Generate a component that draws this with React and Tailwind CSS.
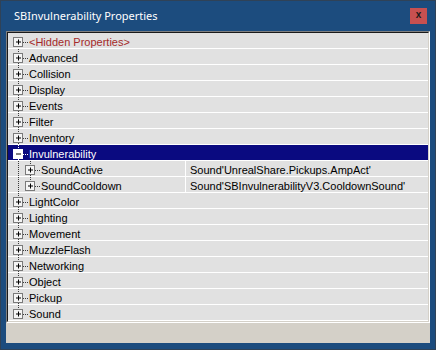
import React from 'react'

const rows = [
  { name: '<Hidden Properties>', hidden: true },
  { name: 'Advanced' },
  { name: 'Collision' },
  { name: 'Display' },
  { name: 'Events' },
  { name: 'Filter' },
  { name: 'Inventory' },
  { name: 'Invulnerability', open: true, selected: true },
  { name: 'SoundActive', child: true, value: "Sound'UnrealShare.Pickups.AmpAct'" },
  { name: 'SoundCooldown', child: true, lastChild: true, value: "Sound'SBInvulnerabilityV3.CooldownSound'" },
  { name: 'LightColor' },
  { name: 'Lighting' },
  { name: 'Movement' },
  { name: 'MuzzleFlash' },
  { name: 'Networking' },
  { name: 'Object' },
  { name: 'Pickup' },
  { name: 'Sound', last: true },
]

// tree glyph: dotted lines + expander box
function Box({ x, open, selected }) {
  return (
    <g>
      <rect x={x - 4.5} y={4.5} width={9} height={9} fill={selected ? '#ffffff' : '#f4f4f4'} stroke={selected ? '#ffffff' : '#7a7a7a'} />
      <line x1={x - 2} y1={9} x2={x + 3} y2={9} stroke="#000000" />
      {!open && <line x1={x + 0.5} y1={6.5} x2={x + 0.5} y2={11.5} stroke="#000000" />}
    </g>
  )
}

function Tree({ row, first }) {
  const dot = row.selected ? '#ffffff' : '#3a3a3a'
  if (row.child) {
    return (
      <svg width="33" height="15" className="shrink-0">
        <line x1="10.5" y1="0" x2="10.5" y2="15" stroke="#3a3a3a" strokeDasharray="1 1" />
        <line x1="22.5" y1="0" x2="22.5" y2={row.lastChild ? 5 : 15} stroke="#3a3a3a" strokeDasharray="1 1" />
        <line x1="27" y1="9.5" x2="32" y2="9.5" stroke="#3a3a3a" strokeDasharray="1 1" />
        <Box x={22} />
      </svg>
    )
  }
  return (
    <svg width="21" height="15" className="shrink-0">
      <line x1="10.5" y1={first ? 9 : 0} x2="10.5" y2={row.last ? 5 : 15} stroke={dot} strokeDasharray="1 1" />
      <line x1="15" y1="9.5" x2="20" y2="9.5" stroke={dot} strokeDasharray="1 1" />
      <Box x={10} open={row.open} selected={row.selected} />
    </svg>
  )
}

export default function App() {
  return (
    <div className="w-[436px] h-[350px] bg-[#1c4c7e] border border-[#2f4257] flex flex-col" style={{ fontFamily: '"Liberation Sans", Arial, sans-serif' }}>
      {/* title bar */}
      <div className="h-[30px] flex items-center justify-between pl-[13px] pr-[8px]">
        <span className="text-white text-[11px]" style={{ fontFamily: '"Noto Sans", sans-serif' }}>SBInvulnerability Properties</span>
        <div className="w-[17px] h-[16px] bg-[#c75050] flex items-center justify-center text-[10px] font-bold text-[#1a1a1a] leading-none pb-[2px]">x</div>
      </div>

      {/* client */}
      <div className="mx-[5px] h-[312px] bg-[#d4d0c8] flex flex-col">
        <div className="border border-t-[#808080] border-l-[#808080] border-r-[#ffffff] border-b-[#ffffff]">
          <div className="border border-t-[#1a1a1a] border-l-[#1a1a1a] border-r-[#d4d0c8] border-b-[#d4d0c8] bg-[#e1e1e1]">
            {rows.map((row, i) => (
              <div key={row.name} className={`h-[16px] flex items-start border-b border-white text-[11px] leading-[15px] ${row.selected ? 'bg-[#0a0a80] text-white' : 'text-black'}`}>
                <div className={`w-[178px] h-[15px] shrink-0 flex items-start ${row.child ? 'border-r border-white' : ''}`}>
                  <Tree row={row} first={i === 0} />
                  <span className={`mt-[2px] ${row.hidden ? 'text-[#a52a2a]' : ''}`}>{row.name}</span>
                </div>
                {row.value && <span className="mt-[2px] pl-[4px] whitespace-nowrap">{row.value}</span>}
              </div>
            ))}
          </div>
        </div>
      </div>
    </div>
  )
}
